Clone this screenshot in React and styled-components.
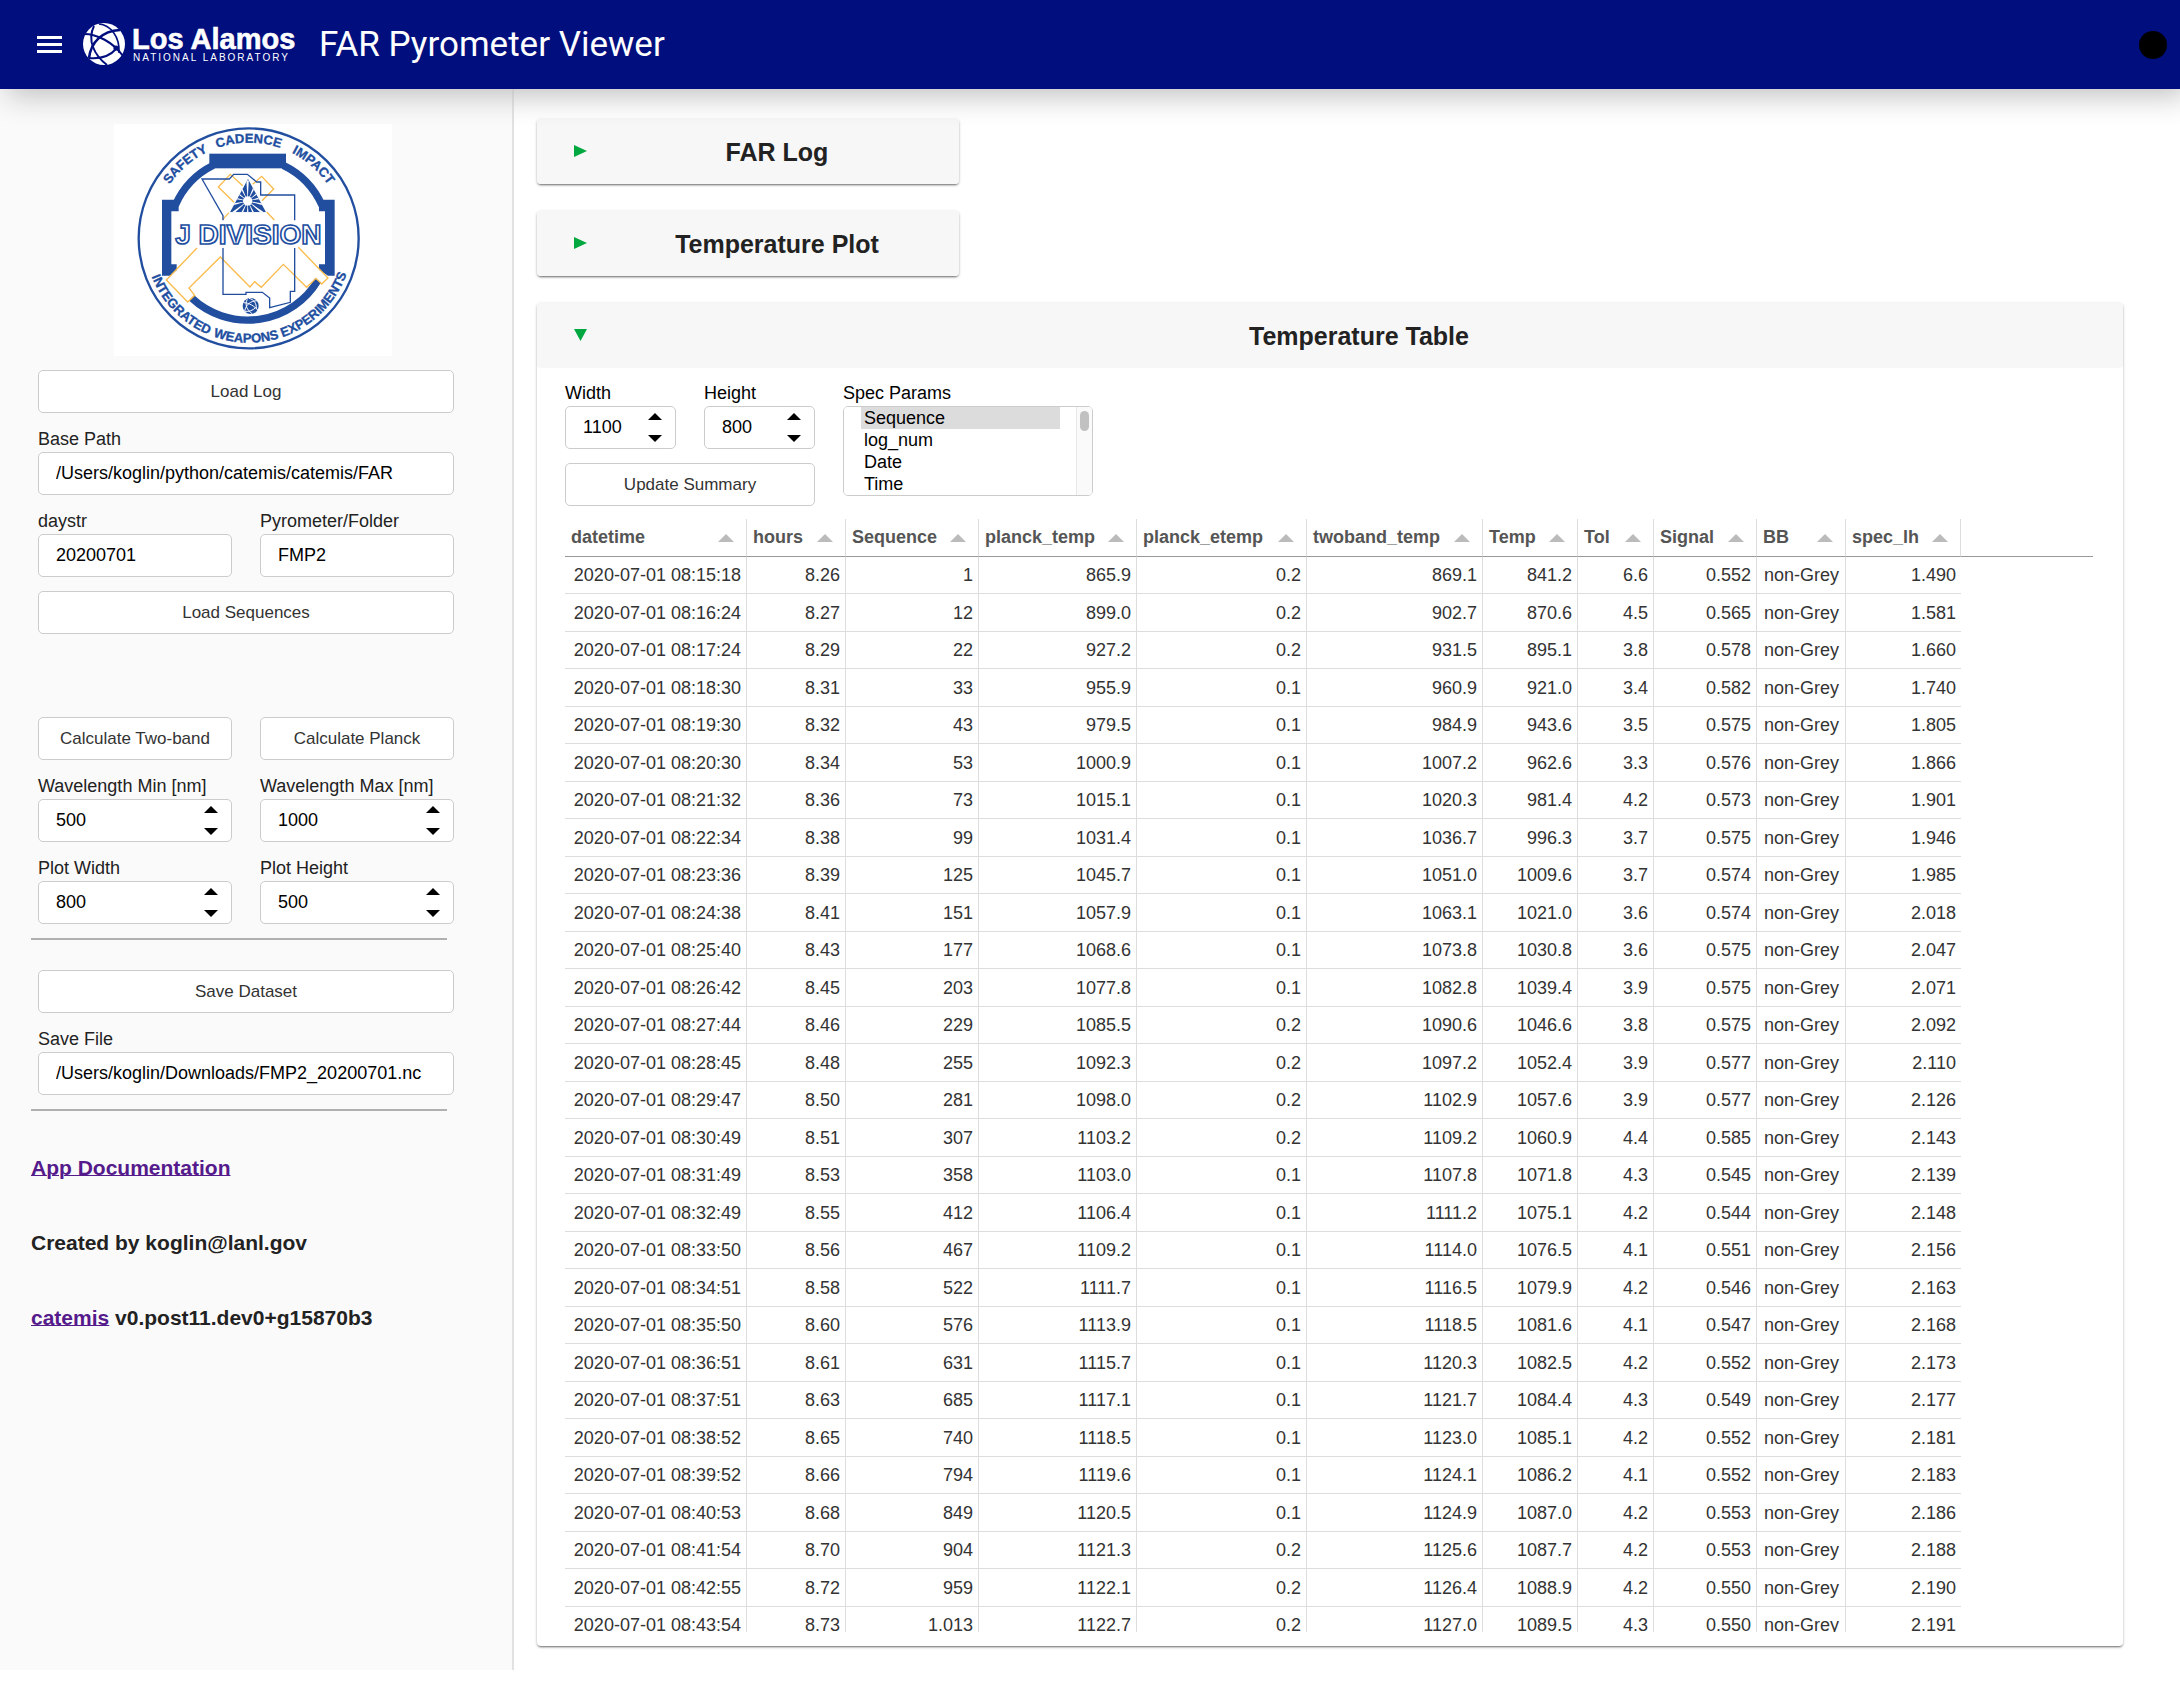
import React, { useId, useState } from "react";
import styled, { createGlobalStyle } from "styled-components";

const sans = `"Liberation Sans", Helvetica, Arial, sans-serif`;

const GlobalStyle = createGlobalStyle`
  *, *::before, *::after { box-sizing: border-box; }
  body { margin: 0; background: #fff; font-family: ${sans}; font-size: 18px; color: #222; }
  button, input, select { font-family: inherit; margin: 0; }
`;

/* ---------- top bar ---------- */

const TopBar = styled.header`
  position: relative;
  z-index: 1;
  display: flex;
  align-items: center;
  height: 89px;
  padding: 0 13px 0 37px;
  background: #000e7e;
  color: #fff;
  box-shadow: 7px 7px 28px silver;
`;

const MenuButton = styled.button`
  display: flex;
  padding: 0;
  border: 0;
  background: none;
  color: inherit;
  cursor: pointer;
`;

const BrandLink = styled.a`
  display: flex;
  margin-left: 20px;
`;

const AppTitle = styled.h1`
  flex: 1;
  margin: 0 0 0 20px;
  font: 400 35px/39px Roboto, sans-serif;
`;

const BusyDot = styled.span`
  width: 28px;
  height: 28px;
  border-radius: 50%;
  background: #000;
`;

/* ---------- page ---------- */

const Page = styled.div`
  display: grid;
  grid-template-columns: 514px minmax(0, 1fr);
`;

const Sidebar = styled.aside`
  padding: 35px 37px 0 31px;
  border-right: 2px solid #e2e2e2;
  background: #fafafa;
`;

const Emblem = styled.div`
  display: flex;
  justify-content: center;
  margin-bottom: 14px;
`;

const Fields = styled.div`
  display: flex;
  flex-direction: column;
  gap: 14px;
  width: 416px;
  margin-left: 7px;
`;

const Pair = styled.div`
  display: grid;
  grid-template-columns: 1fr 1fr;
  gap: 28px;
`;

const Spacer = styled.div`
  height: 55px;
`;

const Rule = styled.hr`
  width: 416px;
  height: 2px;
  margin: 14px 0 ${(p) => p.$after}px;
  border: 0;
  background: #b0b0b0;
`;

const Note = styled.p`
  margin: 0 0 51px;
  font-size: 21px;
  line-height: 24px;
  font-weight: 700;

  a {
    color: #551a8b;
    text-decoration-thickness: 1px;
    text-underline-offset: 0;
  }
`;

/* ---------- form controls ---------- */

const Button = styled.button`
  height: 43px;
  border: 1px solid #ccc;
  border-radius: 5px;
  background: #fff;
  color: #333;
  font-size: 17px;
  cursor: pointer;
`;

const Field = styled.div`
  display: flex;
  flex-direction: column;
  min-width: 0;
`;

const Label = styled.label`
  height: 25px;
  line-height: 24px;
  color: ${(p) => (p.$dark ? "#000" : "#222")};
`;

const InputBox = styled.div`
  display: flex;
  align-items: center;
  height: 43px;
  padding: 0 13px 0 17px;
  border: 1px solid #ccc;
  border-radius: 5px;
  background: #fff;
`;

const Input = styled.input`
  flex: 1;
  min-width: 0;
  padding: 0;
  border: 0;
  outline: 0;
  background: none;
  color: #000;
  font-size: 18px;
  appearance: textfield;

  &::-webkit-inner-spin-button,
  &::-webkit-outer-spin-button {
    appearance: none;
    margin: 0;
  }
`;

const Steps = styled.div`
  display: flex;
  flex-direction: column;
  gap: 15px;
`;

const StepButton = styled.button`
  display: flex;
  padding: 0;
  border: 0;
  background: none;
  cursor: pointer;
`;

const SelectBox = styled.div`
  position: relative;
  display: flex;
`;

const MultiSelect = styled.select`
  width: 250px;
  height: 90px;
  padding: 0 32px 0 17px;
  border: 1px solid #ccc;
  border-radius: 5px;
  outline: 0;
  background: #fff;
  color: #000;
  font-size: 18px;
  scrollbar-width: none;

  option {
    height: 22px;
    min-height: 22px;
    padding: 1px 3px 0;
    line-height: 21px;
  }
  option:checked {
    background: #dcdcdc;
    color: #000;
  }
`;

const ScrollTrack = styled.div`
  position: absolute;
  top: 1px;
  right: 1px;
  bottom: 1px;
  width: 16px;
  padding: 4px 3px;
  border-left: 1px solid #e8e8e8;
  border-radius: 0 4px 4px 0;
  background: #fafafa;
  pointer-events: none;
`;

const ScrollThumb = styled.div`
  width: 9px;
  height: 20px;
  border-radius: 5px;
  background: #c1c1c1;
`;

/* ---------- cards ---------- */

const Main = styled.main`
  display: flex;
  flex-direction: column;
  gap: 27px;
  padding: 30px 57px 24px 23px;
`;

const CardBox = styled.section`
  width: ${(p) => (p.$open ? "100%" : "422px")};
  border-radius: 4px;
  background: #fff;
  box-shadow: 0 2px 2px -1px rgba(0, 0, 0, 0.4), 0 1px 3px rgba(0, 0, 0, 0.28);
`;

const CardHeader = styled.button`
  display: flex;
  align-items: center;
  width: 100%;
  height: 65px;
  padding: 0 0 0 37px;
  border: 0;
  border-radius: 4px;
  background: #f7f7f7;
  color: #222;
  font-size: 25px;
  font-weight: 700;
  cursor: pointer;
`;

const CardTitle = styled.span`
  flex: 1;
  padding: 2px 0 0 8px;
`;

const CardBody = styled.div`
  padding: 13px 30px 14px 28px;
`;

const Controls = styled.div`
  display: flex;
  align-items: flex-start;
  gap: 28px;
  margin-bottom: 13px;
`;

const SizeControls = styled.div`
  display: grid;
  gap: 14px;
  width: 250px;
`;

/* ---------- table ---------- */

const TableView = styled.div`
  height: 1113px;
  overflow: hidden;
`;

const Table = styled.table`
  width: 100%;
  table-layout: fixed;
  border-collapse: separate;
  border-spacing: 0;
  white-space: nowrap;
`;

const HeadCell = styled.th`
  height: 38px;
  padding: 0 12px 0 6px;
  border-right: 1px solid #ddd;
  border-bottom: 1px solid #999;
  color: #555;
  font-weight: 700;

  &:last-child {
    border-right: 0;
  }
`;

const HeadInner = styled.div`
  display: flex;
  align-items: center;
  justify-content: space-between;
`;

const SortButton = styled.button`
  display: flex;
  padding: 0;
  border: 0;
  background: none;
  cursor: pointer;
`;

const Row = styled.tr`
  height: 37px;

  &:nth-child(even) {
    height: 38px;
  }
`;

const Cell = styled.td`
  padding: 1px 5px 0 ${(p) => (p.$left ? 7 : 8)}px;
  border-right: 1px solid #ddd;
  border-bottom: 1px solid #ddd;
  color: #333;
  text-align: ${(p) => (p.$left ? "left" : "right")};

  &:nth-child(11) {
    border-right: 0;
  }
  &:last-child {
    border: 0;
  }
`;

/* ---------- drawings ---------- */

const MenuIcon = () => (
  <svg width="25" height="17" viewBox="0 0 25 17" aria-hidden="true">
    <path d="M0 1.5H25M0 8.5H25M0 15.5H25" stroke="currentColor" strokeWidth="3" />
  </svg>
);

const Brand = () => (
  <svg width="217" height="46" viewBox="0 0 217 46" role="img" aria-label="Los Alamos National Laboratory">
    <circle cx="22" cy="22" r="21" fill="#fff" />
    <g fill="none" stroke="#000e7e">
      <path d="M2 12C15 12 31 20 41 34" strokeWidth="2" />
      <path d="M7 36C9 20 20 9 38 8" strokeWidth="2.6" />
      <path d="M12 4C5 18 12 33 25 43" strokeWidth="2" />
      <path d="M17 2C28 3 38 14 37 31" strokeWidth="1.6" />
      <path d="M7 36C17 37 27 35 34 27" strokeWidth="2" />
    </g>
    <circle cx="34" cy="26" r="2.6" fill="#000e7e" />
    <text x="50" y="27" fill="#fff" stroke="#fff" strokeWidth="0.6" fontFamily={sans} fontWeight="700" fontSize="29">
      Los Alamos
    </text>
    <text x="51" y="39" fill="#fff" fontFamily={sans} fontSize="10" letterSpacing="2">
      NATIONAL LABORATORY
    </text>
  </svg>
);

const navy = "#214e9f";
const gold = "#f9bb4b";

const rays = Array.from({ length: 14 }, (_, i) => {
  const a = (i / 14) * Math.PI * 2 + 0.22;
  const r = 62;
  const w = 0.06;
  const pt = (t) => `${443 + r * Math.cos(t)} ${272 + r * Math.sin(t)}`;
  return `M443 272L${pt(a - w)}L${pt(a + w)}Z`;
}).join("");

const DivisionEmblem = () => (
  <svg width="278" height="232" viewBox="42 41 834 696" role="img" aria-label="J Division emblem">
    <defs>
      <path id="arc-top" d="M159 384A287 287 0 0 1 733 384" />
      <path id="arc-bottom" d="M133 384A313 313 0 0 0 759 384" />
      <clipPath id="tri">
        <path d="M444 206L498 306H390Z" />
      </clipPath>
    </defs>
    <rect x="42" y="41" width="834" height="696" fill="#fff" />
    <circle cx="446" cy="384" r="330" fill="none" stroke={navy} strokeWidth="7" />
    <g fill={navy} stroke={navy} strokeWidth="1" fontFamily={sans} fontWeight="700" fontSize="39" textAnchor="middle">
      <text><textPath href="#arc-top" startOffset="27.5%">SAFETY</textPath></text>
      <text><textPath href="#arc-top" startOffset="50%">CADENCE</textPath></text>
      <text><textPath href="#arc-top" startOffset="73%">IMPACT</textPath></text>
      <text><textPath href="#arc-bottom" startOffset="24.7%">INTEGRATED</textPath></text>
      <text><textPath href="#arc-bottom" startOffset="49.2%">WEAPONS</textPath></text>
      <text><textPath href="#arc-bottom" startOffset="74.7%">EXPERIMENTS</textPath></text>
    </g>
    <g fill="none" stroke={navy} strokeWidth="22">
      <path d="M226 285A242 242 0 0 1 340 165" />
      <path d="M550 165A242 242 0 0 1 666 285" />
      <path d="M275 563A246 246 0 0 0 654 510" />
    </g>
    <g fill={navy}>
      <rect x="328" y="130" width="230" height="44" />
      <path d="M186 268H236V303H214V462H230V480L210 496H186Z" />
      <path d="M704 268H657V303H675V462H657V478L684 496H704Z" />
    </g>
    <g fill="none" stroke={gold} strokeWidth="4">
      <path d="M595 411L684 503L665 521L648 504L620 531L550 462L484 531L464 514L450 530L361 440L267 533L284 555L263 575L199 509L291 413" />
      <path d="M402 276L355 230L391 192L428 226M458 222L485 198L521 236L486 271M387 307L368 328M500 305L523 329" />
    </g>
    <g fill="none" stroke={navy} strokeWidth="4">
      <path d="M369 330V316L306 206H388L401 192H442L470 215H482V254H584V330" />
      <path d="M369 413V552H438V546H487L509 563V592L571 576V543H584V413" />
    </g>
    <g clipPath="url(#tri)">
      <rect x="388" y="204" width="112" height="104" fill={navy} />
      <circle cx="443" cy="272" r="14" fill="#fff" />
      <path d={rays} fill="#fff" />
    </g>
    <text x="445" y="401" textAnchor="middle" fill="#fff" stroke={navy} strokeWidth="5" fontFamily={sans} fontWeight="700" fontSize="84">
      J DIVISION
    </text>
    <circle cx="452" cy="587" r="24" fill={navy} />
    <path d="M430 577C447 577 464 588 474 600M434 602C438 584 450 572 471 571M442 567C433 582 441 599 456 610M447 564C461 567 470 578 469 596M435 603C447 604 458 601 466 592" fill="none" stroke="#fff" strokeWidth="3" />
  </svg>
);

const StepArrow = ({ down }) => (
  <svg width="14" height="7" viewBox="0 0 14 7" aria-hidden="true">
    <path d={down ? "M0 0H14L7 7Z" : "M0 7H14L7 0Z"} />
  </svg>
);

const FoldArrow = ({ open }) => (
  <svg width="13" height="13" viewBox="0 0 13 13" aria-hidden="true">
    <path d={open ? "M0 0H13L6.5 12Z" : "M0 0L13 6L0 12Z"} fill="#00a83f" />
  </svg>
);

const SortArrow = () => (
  <svg width="16" height="8" viewBox="0 0 16 8" aria-hidden="true">
    <path d="M0 8H16L8 0Z" fill="#bbb" />
  </svg>
);

/* ---------- parts ---------- */

function TextField({ label, value }) {
  const id = useId();
  return (
    <Field>
      <Label htmlFor={id}>{label}</Label>
      <InputBox>
        <Input id={id} type="text" defaultValue={value} />
      </InputBox>
    </Field>
  );
}

function NumberField({ label, value, step = 100, dark }) {
  const id = useId();
  const [n, setN] = useState(value);
  return (
    <Field>
      <Label htmlFor={id} $dark={dark}>{label}</Label>
      <InputBox>
        <Input id={id} type="number" value={n} onChange={(e) => setN(Number(e.target.value))} />
        <Steps>
          <StepButton type="button" aria-label={`Increase ${label}`} onClick={() => setN(n + step)}>
            <StepArrow />
          </StepButton>
          <StepButton type="button" aria-label={`Decrease ${label}`} onClick={() => setN(n - step)}>
            <StepArrow down />
          </StepButton>
        </Steps>
      </InputBox>
    </Field>
  );
}

function Card({ title, startOpen = false, children }) {
  const [open, setOpen] = useState(startOpen);
  return (
    <CardBox $open={open}>
      <CardHeader type="button" aria-expanded={open} onClick={() => setOpen(!open)}>
        <FoldArrow open={open} />
        <CardTitle>{title}</CardTitle>
      </CardHeader>
      {open && children && <CardBody>{children}</CardBody>}
    </CardBox>
  );
}

const columns = [
  ["datetime", 182], ["hours", 99], ["Sequence", 133], ["planck_temp", 158],
  ["planck_etemp", 170], ["twoband_temp", 176], ["Temp", 95], ["Tol", 76],
  ["Signal", 103], ["BB", 89], ["spec_lh", 115],
];

const rows = `08:15:18 8.26 1 865.9 0.2 869.1 841.2 6.6 0.552 1.490
08:16:24 8.27 12 899.0 0.2 902.7 870.6 4.5 0.565 1.581
08:17:24 8.29 22 927.2 0.2 931.5 895.1 3.8 0.578 1.660
08:18:30 8.31 33 955.9 0.1 960.9 921.0 3.4 0.582 1.740
08:19:30 8.32 43 979.5 0.1 984.9 943.6 3.5 0.575 1.805
08:20:30 8.34 53 1000.9 0.1 1007.2 962.6 3.3 0.576 1.866
08:21:32 8.36 73 1015.1 0.1 1020.3 981.4 4.2 0.573 1.901
08:22:34 8.38 99 1031.4 0.1 1036.7 996.3 3.7 0.575 1.946
08:23:36 8.39 125 1045.7 0.1 1051.0 1009.6 3.7 0.574 1.985
08:24:38 8.41 151 1057.9 0.1 1063.1 1021.0 3.6 0.574 2.018
08:25:40 8.43 177 1068.6 0.1 1073.8 1030.8 3.6 0.575 2.047
08:26:42 8.45 203 1077.8 0.1 1082.8 1039.4 3.9 0.575 2.071
08:27:44 8.46 229 1085.5 0.2 1090.6 1046.6 3.8 0.575 2.092
08:28:45 8.48 255 1092.3 0.2 1097.2 1052.4 3.9 0.577 2.110
08:29:47 8.50 281 1098.0 0.2 1102.9 1057.6 3.9 0.577 2.126
08:30:49 8.51 307 1103.2 0.2 1109.2 1060.9 4.4 0.585 2.143
08:31:49 8.53 358 1103.0 0.1 1107.8 1071.8 4.3 0.545 2.139
08:32:49 8.55 412 1106.4 0.1 1111.2 1075.1 4.2 0.544 2.148
08:33:50 8.56 467 1109.2 0.1 1114.0 1076.5 4.1 0.551 2.156
08:34:51 8.58 522 1111.7 0.1 1116.5 1079.9 4.2 0.546 2.163
08:35:50 8.60 576 1113.9 0.1 1118.5 1081.6 4.1 0.547 2.168
08:36:51 8.61 631 1115.7 0.1 1120.3 1082.5 4.2 0.552 2.173
08:37:51 8.63 685 1117.1 0.1 1121.7 1084.4 4.3 0.549 2.177
08:38:52 8.65 740 1118.5 0.1 1123.0 1085.1 4.2 0.552 2.181
08:39:52 8.66 794 1119.6 0.1 1124.1 1086.2 4.1 0.552 2.183
08:40:53 8.68 849 1120.5 0.1 1124.9 1087.0 4.2 0.553 2.186
08:41:54 8.70 904 1121.3 0.2 1125.6 1087.7 4.2 0.553 2.188
08:42:55 8.72 959 1122.1 0.2 1126.4 1088.9 4.2 0.550 2.190
08:43:54 8.73 1.013 1122.7 0.2 1127.0 1089.5 4.3 0.550 2.191`
  .split("\n")
  .map((line) => {
    const v = line.split(" ");
    return [`2020-07-01 ${v[0]}`, ...v.slice(1, 9), "non-Grey", v[9]];
  });

const specParams = [
  "Sequence", "log_num", "Date", "Time", "hours", "planck_temp", "planck_etemp",
  "twoband_temp", "Temp", "Tol", "Signal", "BB", "spec_lh", "datetime", "emissivity", "gain",
];

const TemperatureTable = () => (
  <TableView>
    <Table>
      <colgroup>
        {columns.map(([name, width]) => (
          <col key={name} style={{ width }} />
        ))}
        <col />
      </colgroup>
      <thead>
        <tr>
          {columns.map(([name]) => (
            <HeadCell key={name} scope="col">
              <HeadInner>
                {name}
                <SortButton type="button" aria-label={`Sort by ${name}`}>
                  <SortArrow />
                </SortButton>
              </HeadInner>
            </HeadCell>
          ))}
          <HeadCell as="td" />
        </tr>
      </thead>
      <tbody>
        {rows.map((row) => (
          <Row key={row[0]}>
            {row.map((value, i) => (
              <Cell key={columns[i][0]} $left={i === 9}>{value}</Cell>
            ))}
            <Cell />
          </Row>
        ))}
      </tbody>
    </Table>
  </TableView>
);

export default function App() {
  return (
    <>
      <GlobalStyle />
      <TopBar>
        <MenuButton type="button" aria-label="Menu">
          <MenuIcon />
        </MenuButton>
        <BrandLink href="#">
          <Brand />
        </BrandLink>
        <AppTitle>FAR Pyrometer Viewer</AppTitle>
        <BusyDot />
      </TopBar>
      <Page>
        <Sidebar>
          <Emblem>
            <DivisionEmblem />
          </Emblem>
          <Fields>
            <Button type="button">Load Log</Button>
            <TextField label="Base Path" value="/Users/koglin/python/catemis/catemis/FAR" />
            <Pair>
              <TextField label="daystr" value="20200701" />
              <TextField label="Pyrometer/Folder" value="FMP2" />
            </Pair>
            <Button type="button">Load Sequences</Button>
            <Spacer />
            <Pair>
              <Button type="button">Calculate Two-band</Button>
              <Button type="button">Calculate Planck</Button>
            </Pair>
            <Pair>
              <NumberField label="Wavelength Min [nm]" value={500} />
              <NumberField label="Wavelength Max [nm]" value={1000} />
            </Pair>
            <Pair>
              <NumberField label="Plot Width" value={800} />
              <NumberField label="Plot Height" value={500} />
            </Pair>
          </Fields>
          <Rule $after={30} />
          <Fields>
            <Button type="button">Save Dataset</Button>
            <TextField label="Save File" value="/Users/koglin/Downloads/FMP2_20200701.nc" />
          </Fields>
          <Rule $after={45} />
          <Note>
            <a href="#docs">App Documentation</a>
          </Note>
          <Note>Created by koglin@lanl.gov</Note>
          <Note>
            <a href="#catemis">catemis</a> v0.post11.dev0+g15870b3
          </Note>
        </Sidebar>
        <Main>
          <Card title="FAR Log" />
          <Card title="Temperature Plot" />
          <Card title="Temperature Table" startOpen>
            <Controls>
              <SizeControls>
                <Pair>
                  <NumberField label="Width" value={1100} dark />
                  <NumberField label="Height" value={800} dark />
                </Pair>
                <Button type="button">Update Summary</Button>
              </SizeControls>
              <Field>
                <Label htmlFor="spec-params" $dark>Spec Params</Label>
                <SelectBox>
                  <MultiSelect id="spec-params" multiple defaultValue={["Sequence"]}>
                    {specParams.map((name) => (
                      <option key={name} value={name}>{name}</option>
                    ))}
                  </MultiSelect>
                  <ScrollTrack>
                    <ScrollThumb />
                  </ScrollTrack>
                </SelectBox>
              </Field>
            </Controls>
            <TemperatureTable />
          </Card>
        </Main>
      </Page>
    </>
  );
}
